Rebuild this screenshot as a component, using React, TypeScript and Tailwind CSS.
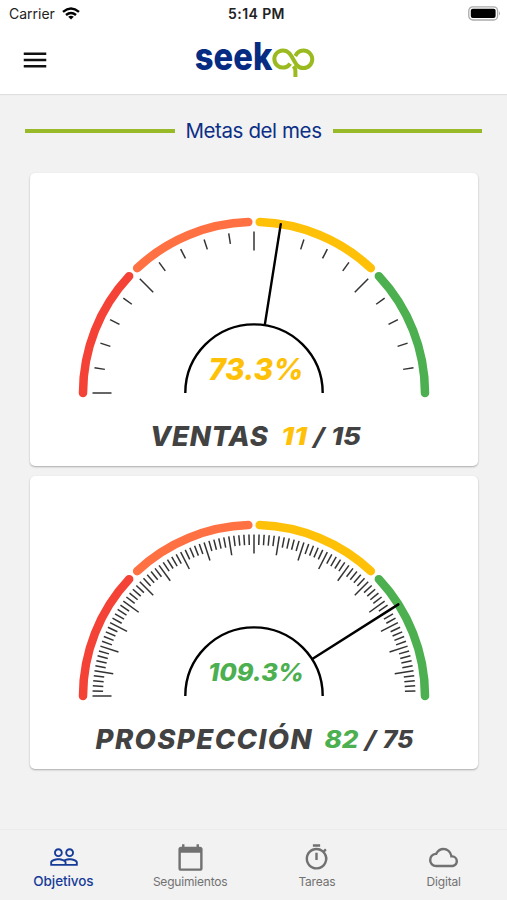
import { MdMenu, MdPeopleOutline, MdCalendarToday, MdOutlineTimer, MdOutlineCloud } from "react-icons/md";

const polar = (r: number, deg: number) => {
  const a = ((180 - deg) * Math.PI) / 180;
  return [224 + r * Math.cos(a), 220 - r * Math.sin(a)];
};

const arc = (r: number, from: number, to: number) => {
  const [x1, y1] = polar(r, from);
  const [x2, y2] = polar(r, to);
  return `M${x1} ${y1}A${r} ${r} 0 0 1 ${x2} ${y2}`;
};

const segments: [number, number, string][] = [
  [0, 43.1, "#f44336"],
  [46.9, 88.1, "#ff7043"],
  [91.9, 133.1, "#ffc107"],
  [136.9, 180, "#4caf50"],
];

type GoalProps = { title: string; value: number; goal: number; percent: string; color: string; percentSize: number; percentWidth: number; percentY: number; titleX: number; titleWidth: number; valueWidth: number; goalWidth: number };

function Goal(p: GoalProps) {
  const count = Math.round((p.goal * 4) / 3);
  const needle = (p.value / p.goal) * 135;
  const [nx1, ny1] = polar(69, needle);
  const [nx2, ny2] = polar(171, needle);
  return (
    <section className="flex h-[293px] flex-col rounded-[5px] bg-white shadow-[0_1px_2px_rgba(0,0,0,0.3)]">
      <svg className="h-[240px] w-[448px]" viewBox="0 0 448 240" fill="none">
        {Array.from({ length: count }, (_, i) => {
          const deg = (i * 180) / count;
          const [x1, y1] = polar(161.5, deg);
          const [x2, y2] = polar(i % 5 === 0 ? 142.5 : 151, deg);
          return <line key={i} x1={x1} y1={y1} x2={x2} y2={y2} stroke="#333" strokeWidth="1.5" />;
        })}
        {segments.map(([from, to, color]) => (
          <path key={color} d={arc(171, from, to)} stroke={color} strokeWidth="8.5" strokeLinecap="round" />
        ))}
        <path d={arc(68.7, 0, 180)} stroke="#000" strokeWidth="2.4" />
        <line x1={nx1} y1={ny1} x2={nx2} y2={ny2} stroke="#000" strokeWidth="2.4" strokeLinecap="round" />
        <text x={226 - p.percentWidth / 2} y={p.percentY} textLength={p.percentWidth} lengthAdjust="spacingAndGlyphs" fill={p.color} fontSize={p.percentSize} fontWeight="800" fontStyle="italic">{p.percent}</text>
      </svg>
      <svg className="h-[50px] w-[448px]" viewBox="0 0 448 50" fontWeight="800" fontStyle="italic" fill="#424242">
        <g transform={`translate(${p.titleX} 0)`}>
          <text x="0" y="33" fontSize="27.5" textLength={p.titleWidth}>{p.title}</text>
          <text x={p.titleWidth + 13} y="31.5" fontSize="24" fill={p.color} textLength={p.valueWidth} lengthAdjust="spacingAndGlyphs">{p.value}</text>
          <text x={p.titleWidth + p.valueWidth + 19} y="32" fontSize="24" fontWeight="700" textLength="11.5" lengthAdjust="spacingAndGlyphs">/</text>
          <text x={p.titleWidth + p.valueWidth + 37} y="31.5" fontSize="24" textLength={p.goalWidth} lengthAdjust="spacingAndGlyphs">{p.goal}</text>
        </g>
      </svg>
    </section>
  );
}

const tabs = [
  { label: "Seguimientos", Icon: MdCalendarToday },
  { label: "Tareas", Icon: MdOutlineTimer },
  { label: "Digital", Icon: MdOutlineCloud },
];

export default function App() {
  return (
    <div className="flex h-[900px] w-[507px] flex-col overflow-hidden bg-[#f2f2f2] font-['Inter',sans-serif]">
      <header className="h-[94px] shrink-0 bg-white shadow-[0_1px_1px_rgba(0,0,0,0.08)]">
        <div className="grid h-[27px] grid-cols-3 items-center pr-[6px] pl-[9px] text-[14px] text-[#222]">
          <div className="flex items-center gap-[7px]">
            <span>Carrier</span>
            <svg className="h-[13px] w-[18px]" viewBox="0 0 18 13" fill="none" stroke="#000" strokeWidth="2.4">
              <path d="M1 4.8Q9-2 17 4.8M4 8Q9 3.8 14 8" />
              <path d="M9 12.5L6.2 9.8Q9 7.8 11.8 9.8Z" fill="#000" stroke="none" />
            </svg>
          </div>
          <span className="pl-[3px] text-center text-[14px] font-semibold tracking-[0.4px] whitespace-nowrap">5:14 PM</span>
          <svg className="h-[15px] w-[33px] justify-self-end" viewBox="0 0 33 15">
            <rect x="0.8" y="0.8" width="28.8" height="13.2" rx="4" fill="#fff" stroke="#aaa" strokeWidth="1.3" />
            <rect x="2.8" y="2.8" width="24.8" height="9.2" rx="2" fill="#000" />
            <path d="M31 5.2Q33 7.4 31 9.6Z" fill="#aaa" />
          </svg>
        </div>
        <div className="flex h-[67px] items-start pl-[20px]">
          <MdMenu className="mt-[18px] size-[30px] text-[#111]" />
          <svg className="ml-[139px] h-[63px] w-[134px]" viewBox="189 27 134 63" fill="none">
            <text x="194.8" y="69.8" fontSize="38" fontWeight="800" fill="#062b82" textLength="77.5" lengthAdjust="spacingAndGlyphs">seek</text>
            <g stroke="#9aba20" strokeWidth="4">
              <path d="M290.2 63.6A8.6 8.6 0 1 1 289.2 53.1C292 56 294.2 62 297.2 65.5A8.8 8.8 0 1 0 297.2 53.1L295.3 56" />
              <path d="M295.4 77V70.5Q295.4 68.5 293.4 66.2" />
            </g>
          </svg>
        </div>
      </header>
      <div className="mt-[23px] flex h-[28px] items-center gap-[10px] px-[25px]">
        <div className="h-[4px] flex-1 bg-[#98ba28]" />
        <h1 className="w-[138px] text-center text-[20.5px] font-normal tracking-[-0.4px] whitespace-nowrap text-[#0c2f86]">Metas del mes</h1>
        <div className="h-[4px] flex-1 bg-[#98ba28]" />
      </div>
      <main className="mt-[28px] flex flex-1 flex-col gap-[10px] pr-[29px] pl-[30px]">
        <Goal title="VENTAS" value={11} goal={15} percent="73.3%" color="#ffc107" percentSize={30} percentWidth={95} percentY={207} titleX={120} titleWidth={118} valueWidth={26} goalWidth={30} />
        <Goal title="PROSPECCIÓN" value={82} goal={75} percent="109.3%" color="#4caf50" percentSize={24.5} percentWidth={96} percentY={205} titleX={65.5} titleWidth={216} valueWidth={34} goalWidth={31} />
      </main>
      <nav className="grid h-[71px] shrink-0 grid-cols-4 border-t border-[#ebebeb] text-[#717171]">
        <div className="flex flex-col items-center text-[#173c98]">
          <MdPeopleOutline className="mt-[12px] ml-[2px] size-[30px]" />
          <span className="mt-px text-[13.5px] leading-[16px] font-medium tracking-[-0.1px]">Objetivos</span>
        </div>
        {tabs.map(({ label, Icon }) => (
          <div key={label} className="flex flex-col items-center">
            <Icon className="mt-[13px] size-[29px]" />
            <span className="mt-[2px] text-[12px] leading-[16px] tracking-[-0.2px]">{label}</span>
          </div>
        ))}
      </nav>
    </div>
  );
}
